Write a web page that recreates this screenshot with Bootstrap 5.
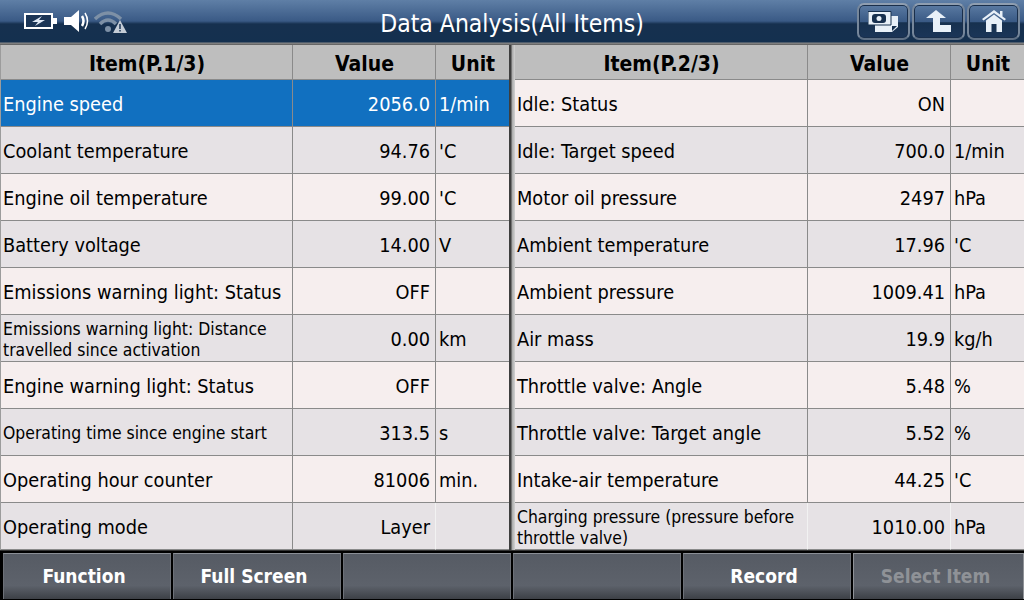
<!DOCTYPE html>
<html lang="en">
<head>
<meta charset="utf-8">
<title>Data Analysis</title>
<link rel="stylesheet" href="https://cdn.jsdelivr.net/npm/bootstrap@5.3.0/dist/css/bootstrap.min.css">
<style>
html,body{width:1024px;height:600px;overflow:hidden;margin:0;background:#000}
body{font-family:"DejaVu Sans Condensed","DejaVu Sans",Tahoma,sans-serif;font-stretch:condensed;color:#000}
.topbar{height:45px;background:linear-gradient(#5f7fa6 0,#3a5a86 21px,#16304f 24px,#14304f 42px,#8a8a8a 43px,#5a5a5a 45px)}
.status-area{width:170px;padding:0 0 4px 24px}
.status-area svg{flex:none}
.ic-sound{margin-left:7px}
.ic-wifi{margin-left:2px}
.screen-title{font-size:24.500px;color:#fff;line-height:1;padding-top:3px}
.top-actions{width:170px;gap:2px;padding:0 4px 2px 0}
.tool-btn{width:53px;height:37px;padding:0;border:2px solid;border-color:#8f9eb0 #76879b #5f7085;border-radius:7px;box-shadow:inset 0 0 0 1px #1a2f4b;background:linear-gradient(#5a7aa2,#3a5a85 50%,#17314f 54%,#1b3558);display:flex;align-items:center;justify-content:center}
.data-wrap{height:505px;background:#9c9c9c}
.pane-left{width:508px;margin-left:1px}
.pane-right{width:509px}
.splitter{width:6px;background:linear-gradient(90deg,#3e3e3e 0,#3e3e3e 2px,#a8a8a8 3px,#d2d2d2 6px)}
.grid-tb{table-layout:fixed;width:100%;border-collapse:separate;border-spacing:0;margin:0}
.grid-tb th,.grid-tb td{border:solid #8a8a8a;border-width:0 1px 1px 0;padding:3px 1px 0 2px;overflow:hidden;white-space:nowrap}
.grid-tb tr>*:last-child{border-right:0}
.grid-tb th{height:35px;padding-top:4px;background:#bebebe;font-size:21px;line-height:26px;font-weight:700;text-align:center;color:#000}
.grid-tb td{height:47px;font-size:19.750px;line-height:22px;padding-top:4px}
.grid-tb tr:nth-child(even) td{background:#e6e2e5}
.grid-tb tr:nth-child(odd) td{background:#f6eeee}
.grid-tb td.num{text-align:right;padding-right:5px}
.grid-tb td.unit{padding-left:3px}
.grid-tb td.tiny{font-size:17.400px;line-height:21px;white-space:normal;padding-top:3px}
.grid-tb tr.sel td{background:#1170c0;color:#fff}
.grid-tb tr:last-child td.num,.pane-right .grid-tb tr:last-child td.tiny{border-right-color:#f2f2f2}
.pane-left .c-item{width:292px}
.pane-right .c-item{width:293px}
.c-val{width:143px}
.footbar{height:50px;background:#000;padding:2px 0 0 3px;gap:2px;border-top:1px solid #333}
.fn-btn{flex:0 0 168px;height:46px;border:0;border-top:1px solid #8b8f96;border-left:1px solid #6d7178;border-right:1px solid #6d7178;border-radius:0;padding:0 6px 0 0;background:linear-gradient(#565b64,#5d626b 70%,#3d4046);color:#fff;font-size:19px;font-weight:700;line-height:1}
.fn-btn:disabled{color:#8f9297;opacity:1;flex-grow:1}
</style>
</head>
<body>
<div class="topbar d-flex align-items-center">
  <div class="status-area d-flex align-items-center">
    <svg width="33" height="16" viewBox="0 0 33 16"><path d="M1 1H28V15H1Z" fill="#1b3556" stroke="#fff" stroke-width="2"/><rect x="29" y="5" width="4" height="6" fill="#fff"/><path d="M18 3L8 9H14L11 13L21 7H15Z" fill="#dfe8f4"/></svg>
    <svg class="ic-sound" width="28" height="22" viewBox="0 0 28 22"><path d="M0 7H7L15 0V22L7 15H0Z" fill="#fff"/><path d="M18 6Q21 11 18 16" fill="none" stroke="#fff" stroke-width="2.500"/><path d="M21 3Q26 11 21 19" fill="none" stroke="#fff" stroke-width="1.500"/></svg>
    <svg class="ic-wifi" width="34" height="24" viewBox="0 0 34 24"><path d="M1 10Q14 -2 27 10" fill="none" stroke="#7d90a6" stroke-width="3.500"/><path d="M6 15Q14 7 22 15" fill="none" stroke="#7d90a6" stroke-width="3.500"/><circle cx="14" cy="20" r="3" fill="#7d90a6"/><path d="M26 11L33 24H19Z" fill="#c4ccd6"/><rect x="25.250" y="15" width="1.500" height="5" fill="#1b3556"/><rect x="25.250" y="21" width="1.500" height="1.500" fill="#1b3556"/></svg>
  </div>
  <div class="screen-title flex-grow-1 text-center">Data Analysis(All Items)</div>
  <div class="top-actions d-flex justify-content-end">
    <button class="tool-btn" aria-label="Screenshot"><svg width="31" height="22" viewBox="0 0 31 22"><path d="M7 5H30V16L24 21H7Z" fill="#e8f0f8"/><path d="M0 .5H23V14H0Z" fill="#e8f0f8" stroke="#17304f" stroke-width="1"/><rect x="4" y="3" width="14" height="9" rx="3" fill="#17304f"/><circle cx="11" cy="7.500" r="2.500" fill="#e8f0f8"/><path d="M24 20L29 15H24Z" fill="#17304f"/></svg></button>
    <button class="tool-btn" aria-label="Back"><svg width="26" height="23" viewBox="0 0 26 23"><path d="M10 0L20 8H14V15H25V22H7V8H0Z" fill="#e8f0f8"/></svg></button>
    <button class="tool-btn" aria-label="Home"><svg width="24" height="23" viewBox="0 0 24 23"><path d="M12 0L18 4.500V1H20.500V6.500L24 9L22.500 10.500L12 3L1.500 10.500L0 9Z" fill="#e8f0f8"/><path d="M12 4.500L20 10.500V22H14.500V14H9.500V22H4V10.500Z" fill="#e8f0f8"/></svg></button>
  </div>
</div>
<div class="data-wrap d-flex">
  <div class="pane-left">
    <table class="grid-tb">
      <colgroup><col class="c-item"><col class="c-val"><col></colgroup>
      <thead><tr><th>Item(P.1/3)</th><th>Value</th><th>Unit</th></tr></thead>
      <tbody>
        <tr class="sel"><td>Engine speed</td><td class="num">2056.0</td><td class="unit">1/min</td></tr>
        <tr><td>Coolant temperature</td><td class="num">94.76</td><td class="unit">'C</td></tr>
        <tr><td>Engine oil temperature</td><td class="num">99.00</td><td class="unit">'C</td></tr>
        <tr><td>Battery voltage</td><td class="num">14.00</td><td class="unit">V</td></tr>
        <tr><td>Emissions warning light: Status</td><td class="num">OFF</td><td class="unit"></td></tr>
        <tr><td class="tiny">Emissions warning light: Distance travelled since activation</td><td class="num">0.00</td><td class="unit">km</td></tr>
        <tr><td>Engine warning light: Status</td><td class="num">OFF</td><td class="unit"></td></tr>
        <tr><td class="tiny">Operating time since engine start</td><td class="num">313.5</td><td class="unit">s</td></tr>
        <tr><td>Operating hour counter</td><td class="num">81006</td><td class="unit">min.</td></tr>
        <tr><td>Operating mode</td><td class="num">Layer</td><td class="unit"></td></tr>
      </tbody>
    </table>
  </div>
  <div class="splitter"></div>
  <div class="pane-right">
    <table class="grid-tb">
      <colgroup><col class="c-item"><col class="c-val"><col></colgroup>
      <thead><tr><th>Item(P.2/3)</th><th>Value</th><th>Unit</th></tr></thead>
      <tbody>
        <tr><td>Idle: Status</td><td class="num">ON</td><td class="unit"></td></tr>
        <tr><td>Idle: Target speed</td><td class="num">700.0</td><td class="unit">1/min</td></tr>
        <tr><td>Motor oil pressure</td><td class="num">2497</td><td class="unit">hPa</td></tr>
        <tr><td>Ambient temperature</td><td class="num">17.96</td><td class="unit">'C</td></tr>
        <tr><td>Ambient pressure</td><td class="num">1009.41</td><td class="unit">hPa</td></tr>
        <tr><td>Air mass</td><td class="num">19.9</td><td class="unit">kg/h</td></tr>
        <tr><td>Throttle valve: Angle</td><td class="num">5.48</td><td class="unit">%</td></tr>
        <tr><td>Throttle valve: Target angle</td><td class="num">5.52</td><td class="unit">%</td></tr>
        <tr><td>Intake-air temperature</td><td class="num">44.25</td><td class="unit">'C</td></tr>
        <tr><td class="tiny">Charging pressure (pressure before throttle valve)</td><td class="num">1010.00</td><td class="unit">hPa</td></tr>
      </tbody>
    </table>
  </div>
</div>
<div class="footbar d-flex">
  <button class="btn fn-btn">Function</button>
  <button class="btn fn-btn">Full Screen</button>
  <button class="btn fn-btn"></button>
  <button class="btn fn-btn"></button>
  <button class="btn fn-btn">Record</button>
  <button class="btn fn-btn" disabled>Select Item</button>
</div>
</body>
</html>
